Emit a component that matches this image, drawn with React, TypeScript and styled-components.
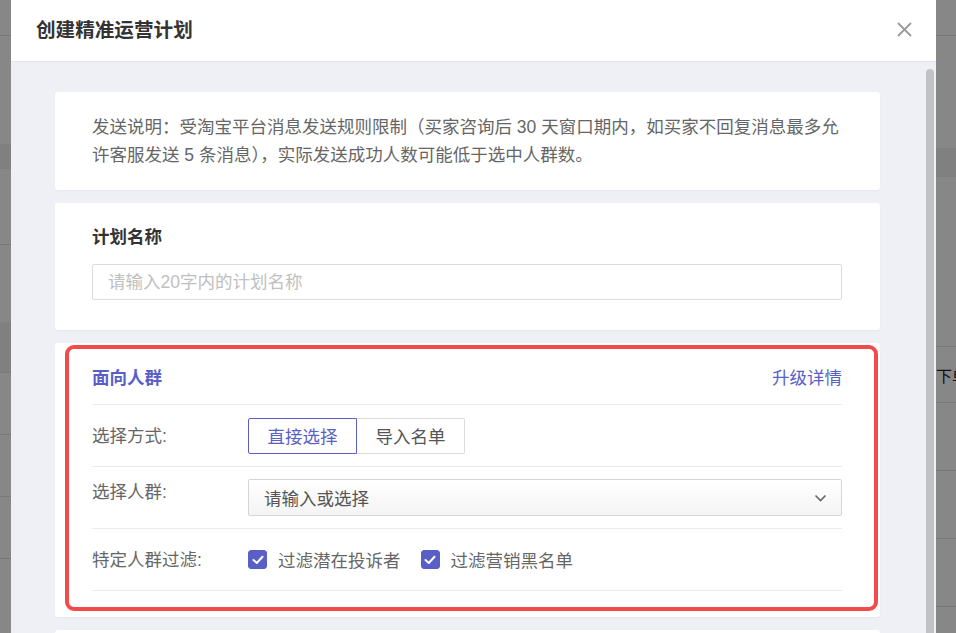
import React, { useState } from "react";
import styled, { createGlobalStyle, css } from "styled-components";

const GlobalStyle = createGlobalStyle`
  html, body {
    margin: 0;
    padding: 0;
    overflow: hidden;
  }
  body {
    font-family: "Liberation Sans", "Noto Sans CJK SC", sans-serif;
    background: #fff;
  }
  * {
    box-sizing: border-box;
  }
`;

const PRIMARY = "#5a5fc8";

// 背景页面(遮罩下面)
const Page = styled.div`
  display: flex;
  width: 956px;
  height: 633px;
  background: #fff;
  overflow: hidden;
`;

const PageStrip = styled.div<{ $width?: number }>`
  display: flex;
  flex-direction: column;
  min-width: 0;
  overflow: hidden;
  ${props =>
    props.$width
      ? css`
          width: ${props.$width}px;
          flex-shrink: 0;
        `
      : css`
          flex: 1;
        `}
`;

const PageRow = styled.div<{ $h: number; $band?: boolean; $line?: boolean }>`
  height: ${props => props.$h}px;
  flex-shrink: 0;
  display: flex;
  align-items: center;
  font-size: 16px;
  color: #222;
  white-space: nowrap;
  background: ${props => (props.$band ? "#f2f2f2" : "#fff")};
  border-bottom: ${props => (props.$line ? "1px solid #e3e3e3" : "none")};
`;

const Overlay = styled.div`
  position: fixed;
  inset: 0;
  background: rgba(0, 0, 0, 0.47);
  padding-left: 11px;
  overflow: hidden;
`;

const Modal = styled.div`
  position: relative;
  width: 925px;
  height: 820px;
  background: #eef0f5;
  display: flex;
  flex-direction: column;
`;

const ModalHeader = styled.div`
  height: 62px;
  flex-shrink: 0;
  background: #fff;
  border-bottom: 1px solid #e4e5ea;
  display: flex;
  align-items: center;
  justify-content: space-between;
  padding: 0 24px 0 25px;
`;

const ModalTitle = styled.div`
  font-size: 19.6px;
  font-weight: 700;
  color: #333;
  line-height: 26px;
  margin-top: -2px;
`;

const CloseButton = styled.div`
  width: 16px;
  height: 16px;
  display: flex;
  align-items: center;
  justify-content: center;
  cursor: pointer;
  margin-top: -2px;
`;

const ModalBody = styled.div`
  flex: 1;
  overflow: hidden;
  padding: 30px 56px 30px 44px;
  display: flex;
  flex-direction: column;
  gap: 13px;
`;

// 滚动条滑块,压在内容区右侧
const ScrollThumb = styled.div`
  position: absolute;
  top: 69px;
  right: 2px;
  bottom: 0;
  width: 8px;
  background: #c1c2c6;
  border-radius: 4px 4px 0 0;
`;

const Card = styled.div<{ $pad?: string; $height?: number }>`
  position: relative;
  flex-shrink: 0;
  background: #fff;
  border-radius: 3px;
  box-shadow: 0 1px 2px rgba(0, 0, 0, 0.04);
  padding: ${props => props.$pad || "22px 38px 26px 37px"};
  ${props =>
    props.$height &&
    css`
      height: ${props.$height}px;
    `}
`;

const Notice = styled.div`
  font-size: 17.5px;
  line-height: 28px;
  color: #666;
`;

const CardTitle = styled.div`
  font-size: 17.5px;
  font-weight: 700;
  line-height: 26px;
  color: #333;
  margin-bottom: 14px;
`;

const TextInput = styled.input`
  display: block;
  width: 100%;
  height: 36px;
  border: 1px solid #dcdcdc;
  border-radius: 2px;
  padding: 0 15px;
  font-family: inherit;
  font-size: 17.5px;
  color: #333;
  outline: none;

  &::placeholder {
    color: #c0c0c0;
  }
`;

const SectionHeader = styled.div`
  display: flex;
  align-items: center;
  justify-content: space-between;
  padding: 0 0 13px;
  line-height: 26px;
  border-bottom: 1px solid #ebebeb;
`;

const SectionTitle = styled.div`
  font-size: 17.5px;
  font-weight: 700;
  color: ${PRIMARY};
`;

const LinkText = styled.a`
  font-size: 17.5px;
  color: ${PRIMARY};
  text-decoration: none;
  cursor: pointer;
`;

const FormRow = styled.div`
  display: flex;
  align-items: center;
  height: 62px;
  border-bottom: 1px solid #ebebeb;
`;

const FormLabel = styled.div<{ $top?: boolean }>`
  width: 156px;
  flex-shrink: 0;
  font-size: 17.5px;
  line-height: 26px;
  color: #666;
  ${props =>
    props.$top &&
    css`
      align-self: flex-start;
      margin-top: 12px;
    `}
`;

const Segmented = styled.div`
  display: flex;
`;

const SegmentButton = styled.div<{ $active: boolean }>`
  position: relative;
  width: 109px;
  height: 36px;
  display: flex;
  align-items: center;
  justify-content: center;
  font-size: 17.5px;
  cursor: pointer;
  background: #fff;
  border: 1px solid ${props => (props.$active ? PRIMARY : "#dcdcdc")};
  color: ${props => (props.$active ? PRIMARY : "#555")};
  z-index: ${props => (props.$active ? 1 : 0)};

  &:first-child {
    border-radius: 2px 0 0 2px;
  }
  &:last-child {
    border-radius: 0 2px 2px 0;
    margin-left: -1px;
  }
`;

const SelectBox = styled.div`
  flex: 1;
  height: 37px;
  display: flex;
  align-items: center;
  justify-content: space-between;
  padding: 0 14px 0 15px;
  border: 1px solid #d5d5d5;
  border-radius: 2px;
  background: linear-gradient(#ffffff, #f4f4f4);
  font-size: 17.5px;
  color: #555;
  cursor: pointer;
`;

const CheckGroup = styled.div`
  display: flex;
  align-items: center;
  gap: 20px;
`;

const CheckItem = styled.label`
  display: flex;
  align-items: center;
  gap: 11px;
  font-size: 17.5px;
  color: #666;
  cursor: pointer;
`;

const CheckBox = styled.span<{ $checked: boolean }>`
  width: 19px;
  height: 19px;
  border-radius: 3px;
  display: flex;
  align-items: center;
  justify-content: center;
  background: ${props => (props.$checked ? PRIMARY : "#fff")};
  border: 1px solid ${props => (props.$checked ? PRIMARY : "#ccc")};
`;

// 截图上的红框标注
const Highlight = styled.div`
  position: absolute;
  left: 10px;
  top: 2px;
  right: 2px;
  bottom: 6px;
  border: 4.5px solid #f24b4b;
  border-radius: 9px;
  pointer-events: none;
`;

const leftRows = [
  { h: 36, line: true },
  { h: 108 },
  { h: 25, band: true },
  { h: 76, line: true },
  { h: 77 },
  { h: 51, band: true, line: true },
  { h: 62, line: true },
  { h: 62, line: true },
  { h: 62, line: true },
  { h: 80 },
];

const rightRows = [
  { h: 36, line: true },
  { h: 112 },
  { h: 29, band: true },
  { h: 170, line: true },
  { h: 56, line: true, text: "下单时间" },
  { h: 68, line: true },
  { h: 68, line: true },
  { h: 68, line: true },
  { h: 40 },
];

const CloseIcon = () => (
  <svg width="15" height="15" viewBox="0 0 15 15">
    <path d="M1.5 1.5 L13.5 13.5 M13.5 1.5 L1.5 13.5" stroke="#9a9a9a" strokeWidth="1.8" strokeLinecap="round" />
  </svg>
);

const ChevronDown = () => (
  <svg width="13" height="8" viewBox="0 0 13 8">
    <polyline points="1.5,1.5 6.5,6.5 11.5,1.5" fill="none" stroke="#666" strokeWidth="1.6" />
  </svg>
);

const CheckMark = () => (
  <svg width="12" height="10" viewBox="0 0 12 10">
    <polyline points="1.5,5 4.8,8 10.5,1.8" fill="none" stroke="#fff" strokeWidth="2" strokeLinecap="round" strokeLinejoin="round" />
  </svg>
);

const App = () => {
  const [mode, setMode] = useState("direct");
  const [filters, setFilters] = useState({ complaint: true, blacklist: true });

  const toggleFilter = (key: "complaint" | "blacklist") => {
    setFilters(prev => ({ ...prev, [key]: !prev[key] }));
  };

  return (
    <>
      <GlobalStyle />
      <Page>
        <PageStrip $width={936}>
          {leftRows.map((row, index) => (
            <PageRow key={index} $h={row.h} $band={row.band} $line={row.line} />
          ))}
        </PageStrip>
        <PageStrip>
          {rightRows.map((row, index) => (
            <PageRow key={index} $h={row.h} $band={row.band} $line={row.line}>
              {row.text}
            </PageRow>
          ))}
        </PageStrip>
      </Page>

      <Overlay>
        <Modal>
          <ModalHeader>
            <ModalTitle>创建精准运营计划</ModalTitle>
            <CloseButton>
              <CloseIcon />
            </CloseButton>
          </ModalHeader>

          <ModalBody>
            <Card $pad="21px 35px 21px 37px">
              <Notice>
                发送说明：受淘宝平台消息发送规则限制（买家咨询后 30 天窗口期内，如买家不回复消息最多允许客服发送 5 条消息），实际发送成功人数可能低于选中人群数。
              </Notice>
            </Card>

            <Card $pad="21px 38px 30px 37px">
              <CardTitle>计划名称</CardTitle>
              <TextInput placeholder="请输入20字内的计划名称" />
            </Card>

            <Card>
              <SectionHeader>
                <SectionTitle>面向人群</SectionTitle>
                <LinkText>升级详情</LinkText>
              </SectionHeader>

              <FormRow>
                <FormLabel>选择方式:</FormLabel>
                <Segmented>
                  <SegmentButton $active={mode === "direct"} onClick={() => setMode("direct")}>
                    直接选择
                  </SegmentButton>
                  <SegmentButton $active={mode === "import"} onClick={() => setMode("import")}>
                    导入名单
                  </SegmentButton>
                </Segmented>
              </FormRow>

              <FormRow>
                <FormLabel $top>选择人群:</FormLabel>
                <SelectBox>
                  <span>请输入或选择</span>
                  <ChevronDown />
                </SelectBox>
              </FormRow>

              <FormRow>
                <FormLabel>特定人群过滤:</FormLabel>
                <CheckGroup>
                  <CheckItem onClick={() => toggleFilter("complaint")}>
                    <CheckBox $checked={filters.complaint}>{filters.complaint && <CheckMark />}</CheckBox>
                    过滤潜在投诉者
                  </CheckItem>
                  <CheckItem onClick={() => toggleFilter("blacklist")}>
                    <CheckBox $checked={filters.blacklist}>{filters.blacklist && <CheckMark />}</CheckBox>
                    过滤营销黑名单
                  </CheckItem>
                </CheckGroup>
              </FormRow>

              <Highlight />
            </Card>

            <Card $height={180} />
          </ModalBody>
          <ScrollThumb />
        </Modal>
      </Overlay>
    </>
  );
};

export default App;
